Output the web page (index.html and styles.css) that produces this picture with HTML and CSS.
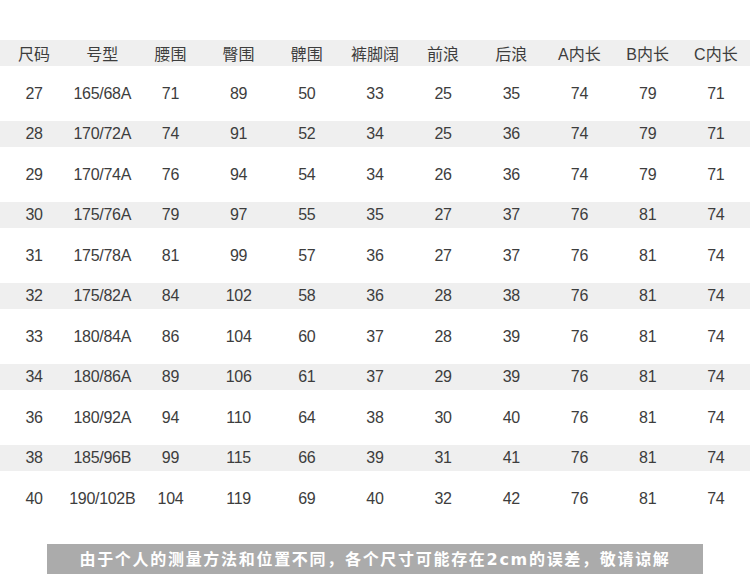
FILE: index.html
```html
<!DOCTYPE html>
<html lang="zh">
<head>
<meta charset="utf-8">
<title>尺码表</title>
<link rel="stylesheet" href="styles.css">
</head>
<body>
<div class="page">
  <table class="size-table">
    <thead>
      <tr class="row head"><th>尺码</th><th>号型</th><th>腰围</th><th>臀围</th><th>髀围</th><th>裤脚阔</th><th>前浪</th><th>后浪</th><th>A内长</th><th>B内长</th><th>C内长</th></tr>
    </thead>
    <tbody>
      <tr class="row tall"><td>27</td><td>165/68A</td><td>71</td><td>89</td><td>50</td><td>33</td><td>25</td><td>35</td><td>74</td><td>79</td><td>71</td></tr>
      <tr class="row shade"><td>28</td><td>170/72A</td><td>74</td><td>91</td><td>52</td><td>34</td><td>25</td><td>36</td><td>74</td><td>79</td><td>71</td></tr>
      <tr class="row tall"><td>29</td><td>170/74A</td><td>76</td><td>94</td><td>54</td><td>34</td><td>26</td><td>36</td><td>74</td><td>79</td><td>71</td></tr>
      <tr class="row shade"><td>30</td><td>175/76A</td><td>79</td><td>97</td><td>55</td><td>35</td><td>27</td><td>37</td><td>76</td><td>81</td><td>74</td></tr>
      <tr class="row tall"><td>31</td><td>175/78A</td><td>81</td><td>99</td><td>57</td><td>36</td><td>27</td><td>37</td><td>76</td><td>81</td><td>74</td></tr>
      <tr class="row shade"><td>32</td><td>175/82A</td><td>84</td><td>102</td><td>58</td><td>36</td><td>28</td><td>38</td><td>76</td><td>81</td><td>74</td></tr>
      <tr class="row tall"><td>33</td><td>180/84A</td><td>86</td><td>104</td><td>60</td><td>37</td><td>28</td><td>39</td><td>76</td><td>81</td><td>74</td></tr>
      <tr class="row shade"><td>34</td><td>180/86A</td><td>89</td><td>106</td><td>61</td><td>37</td><td>29</td><td>39</td><td>76</td><td>81</td><td>74</td></tr>
      <tr class="row tall"><td>36</td><td>180/92A</td><td>94</td><td>110</td><td>64</td><td>38</td><td>30</td><td>40</td><td>76</td><td>81</td><td>74</td></tr>
      <tr class="row shade"><td>38</td><td>185/96B</td><td>99</td><td>115</td><td>66</td><td>39</td><td>31</td><td>41</td><td>76</td><td>81</td><td>74</td></tr>
      <tr class="row tall"><td>40</td><td>190/102B</td><td>104</td><td>119</td><td>69</td><td>40</td><td>32</td><td>42</td><td>76</td><td>81</td><td>74</td></tr>
    </tbody>
  </table>
  <div class="note">由于个人的测量方法和位置不同，各个尺寸可能存在2cm的误差，敬请谅解</div>
</div>
</body>
</html>
```

FILE: styles.css
```css
html, body {
  margin: 0;
  padding: 0;
  background: #ffffff;
}

.page {
  width: 750px;
  padding-top: 40px;
  font-family: "Liberation Sans", "Noto Sans CJK SC", sans-serif;
  color: #3d3d3d;
}

.size-table {
  width: 750px;
  border-collapse: collapse;
  table-layout: fixed;
}

.size-table th,
.size-table td {
  padding: 0;
  text-align: center;
  font-size: 16px;
  font-weight: normal;
  white-space: nowrap;
  letter-spacing: -0.3px;
}

.size-table th {
  font-family: "Noto Sans CJK SC", sans-serif;
  letter-spacing: 0;
}

.row.head th:nth-child(n+9) {
  font-family: "Liberation Sans", "Noto Sans CJK SC", sans-serif;
}

.row.head,
.row.shade {
  background: #efefef;
  height: 26px;
}

.row.tall {
  height: 55px;
}

.note {
  margin: 18px 47px 0 47px;
  height: 30px;
  background: #ababab;
  color: #ffffff;
  font-family: "DejaVu Sans", "Noto Sans CJK SC", sans-serif;
  font-weight: bold;
  font-size: 16px;
  letter-spacing: 1.7px;
  line-height: 31px;
  text-align: center;
}
```
